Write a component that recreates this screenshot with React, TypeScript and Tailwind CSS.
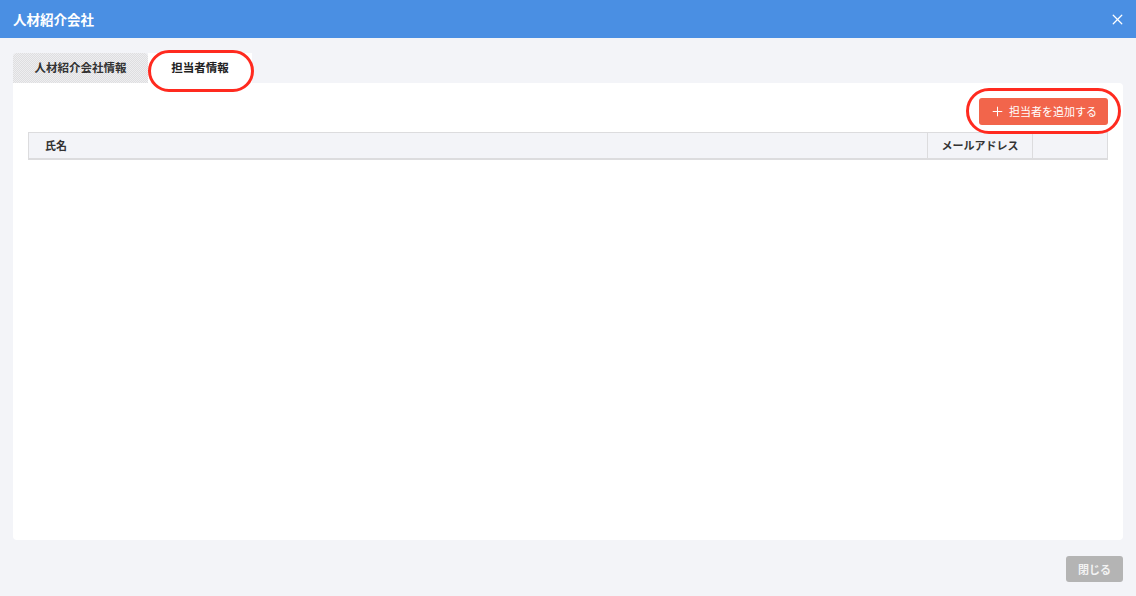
import { X, Plus } from "lucide-react";

const font = { fontFamily: '"Noto Sans CJK JP", "Noto Sans", sans-serif' };

export default function App() {
  return (
    <div className="w-[1136px] h-[596px] bg-[#f3f4f8] flex flex-col" style={font}>
      <div className="h-[38px] bg-[#4a8fe3] flex items-center justify-between px-[13px]">
        <span className="text-white text-[13.5px] font-bold">人材紹介会社</span>
        <X className="text-white w-[17px] h-[17px] mr-[-3px]" strokeWidth={1.8} />
      </div>

      <div className="flex flex-col px-[13px] pt-[15px]">
        <div className="flex h-[30px] items-end">
          <div className="w-[135px] h-[30px] rounded-t-[4px] bg-[repeating-conic-gradient(#dedee0_0_25%,#eeeef0_0_50%)] bg-[length:2px_2px] flex items-center justify-center text-[11.5px] font-bold text-[#333]">
            人材紹介会社情報
          </div>
          <div className="relative w-[104px] h-[30px] bg-white flex items-center justify-center text-[11.5px] font-bold text-[#222]">
            担当者情報
            <div className="absolute left-[0px] top-[-3px] w-[106px] h-[42px] rounded-[22px] border-[3px] border-[#ff2a1f]" />
          </div>
        </div>

        <div className="h-[457px] bg-white rounded-b-[4px] rounded-tr-[4px] px-[15px] pt-[15px]">
          <div className="flex justify-end">
            <div className="relative">
              <button className="h-[27px] w-[129px] bg-[#f2654b] rounded-[3px] flex items-center justify-center gap-[4px] text-white text-[11px]">
                <Plus className="w-[15px] h-[15px]" strokeWidth={1.6} />
                担当者を追加する
              </button>
              <div className="absolute left-[-13px] top-[-10px] w-[155px] h-[46px] rounded-[23px] border-[3px] border-[#ff2a1f]" />
            </div>
          </div>

          <div className="mt-[7px] flex h-[28px] bg-[#f3f4f8] border border-[#dcdcde] border-b-2 text-[11px] font-bold text-[#333]">
            <div className="flex-1 flex items-center pl-[16px]">氏名</div>
            <div className="w-[105px] flex items-center justify-center border-l border-[#dcdcde]">メールアドレス</div>
            <div className="w-[75px] border-l border-[#dcdcde]" />
          </div>
        </div>

        <div className="flex justify-end mt-[16px]">
          <button className="h-[26px] w-[57px] bg-[#b4b4b4] rounded-[3px] text-[11px] text-[#f2f2f2] font-bold">
            閉じる
          </button>
        </div>
      </div>
    </div>
  );
}
